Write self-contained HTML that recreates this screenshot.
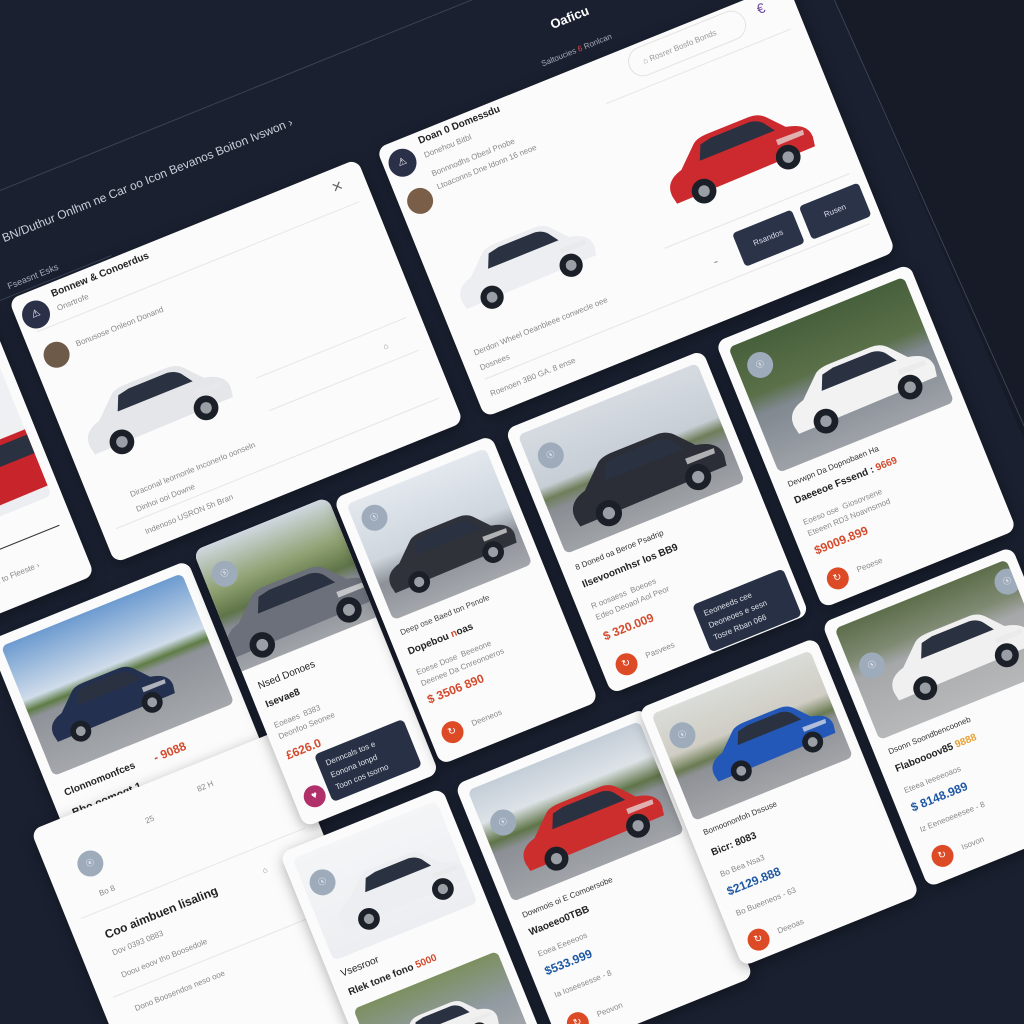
<!DOCTYPE html>
<html><head><meta charset="utf-8"><style>
html,body{margin:0;padding:0;width:1024px;height:1024px;overflow:hidden;background:#1a2030;font-family:"Liberation Sans",sans-serif;}
#root{position:relative;width:1024px;height:1024px;overflow:hidden;background:#1a2030}
.bg2{position:absolute;left:0;top:0;width:1024px;height:1024px;background:#161b27;clip-path:polygon(835px 0,1024px 0,1024px 440px);}
.bl{position:absolute;background:#3a4255;height:1px;transform-origin:0 0;}
.card{position:absolute;background:#fbfbfb;border-radius:10px;transform:translate(-50%,-50%) rotate(-22deg);overflow:hidden;box-shadow:0 4px 14px rgba(0,0,0,.35);}
.img{position:absolute;left:10px;right:10px;top:10px;border-radius:6px;background:linear-gradient(#b9c6d4,#dfe4ea 38%,#6f8a58 50%,#7c8a6a 55%,#9a9fa6 60%,#b0b3b8);overflow:hidden}
.img.w{background:linear-gradient(#f4f5f7,#eceef1)}
.img.g{background:linear-gradient(#47603c,#5a7049 40%,#808890 55%,#9ea2a8)}
.car{position:absolute}
.badge{position:absolute;width:26px;height:26px;border-radius:50%;background:#9eabbb;color:#fff;font-size:8px;text-align:center;line-height:26px}
.t{position:absolute;font-size:10px;color:#222;white-space:nowrap;font-weight:bold}
.s{position:absolute;font-size:8px;color:#888;white-space:nowrap}
.p{position:absolute;font-size:12px;font-weight:bold;white-space:nowrap;color:#d44a2c}
.p.b{color:#1f58a3}
.btn{position:absolute;width:22px;height:22px;border-radius:50%;background:#dd4a26;color:#fff;font-size:10px;text-align:center;line-height:22px}
.hr{position:absolute;left:14px;right:14px;height:1px;background:#e6e6e6}
.dk{position:absolute;background:#273044;color:#dfe3ea;font-size:8px;border-radius:5px;padding:6px 8px;line-height:13px}
.dt{position:absolute;color:#c9ced8;font-size:11px;white-space:nowrap;transform-origin:0 0;transform:rotate(-22deg)}
</style></head><body><div id="root">
<svg width="0" height="0" style="position:absolute"><defs>
<symbol id="car" viewBox="0 0 200 100"><path fill="currentColor" d="M8 72 Q6 52 30 46 L56 22 Q62 17 76 17 L130 17 Q143 17 151 27 L167 45 Q193 50 193 68 L191 80 L10 82 Z"/><path fill="#2a3140" d="M63 26 L78 23 L128 23 Q138 24 144 31 L153 44 L55 44 Z"/><path fill="#e8e8e8" d="M150 55 L185 56 L184 62 L150 62 Z" opacity=".7"/><circle cx="46" cy="80" r="15" fill="#1b1f27"/><circle cx="156" cy="80" r="15" fill="#1b1f27"/><circle cx="46" cy="80" r="7" fill="#9a9ea5"/><circle cx="156" cy="80" r="7" fill="#9a9ea5"/></symbol>
</defs></svg>
<div class="bg2"></div>
<div class="bl" style="left:835px;top:0;width:470px;transform:rotate(66deg)"></div>
<div class="bl" style="left:0;top:190px;width:520px;transform:rotate(-22deg)"></div>
<div class="bl" style="left:0;top:300px;width:120px;transform:rotate(-22deg)"></div>

<div class="dt" style="left:548px;top:18px;font-size:13px;color:#fff;font-weight:bold">Oaficu</div>
<div class="dt" style="left:540px;top:60px;font-size:8px;color:#aab">Saltoucies <span style="color:#d44">6</span> Ronlcan</div>
<div class="dt" style="left:0;top:232px;font-size:12px">BN/Duthur Onlhm ne Car oo Icon Bevanos Boiton Ivswon ›</div>
<div class="dt" style="left:6px;top:282px;font-size:9px;color:#aab">Fseasnt Esks</div>

<!-- left partial card C -->
<div class="card" style="left:-125px;top:432px;width:300px;height:430px">
 <div class="img w" style="height:330px"><svg class="car" style="left:165px;top:240px;width:190px;height:100px;color:#c8242c"><use href="#car"/></svg></div>
 <div class="hr" style="top:370px;background:#333"></div>
 <div class="s" style="left:200px;top:395px">Dn to Fleeste ›</div>
</div>

<!-- card B modal -->
<div class="card" style="left:236px;top:361px;width:376px;height:284px">
 <div style="position:absolute;left:342px;top:8px;font-size:18px;color:#666">×</div>
 <div class="hr" style="top:40px"></div>
 <div style="position:absolute;left:6px;top:10px;width:28px;height:28px;border-radius:50%;background:#2a3048;color:#fff;font-size:10px;text-align:center;line-height:28px">⚠</div>
 <div class="t" style="left:42px;top:6px">Bonnew &amp; Conoerdus</div>
 <div class="s" style="left:42px;top:22px">Onsrtrofe</div>
 <div style="position:absolute;left:11px;top:56px;width:26px;height:26px;border-radius:50%;background:#6d5a48"></div>
 <div class="s" style="left:46px;top:62px">Bonusose Onleon Donand</div>
 <svg class="car" style="left:14px;top:92px;width:165px;height:115px;color:#e4e6ea"><use href="#car"/></svg>
 <div class="hr" style="top:165px;left:200px"></div>
 <div class="hr" style="top:200px;left:200px"></div>
 <div class="s" style="left:330px;top:180px">⌂</div>
 <div class="s" style="left:40px;top:222px">Diraconal leornonle Inconerlo oonseln</div>
 <div class="s" style="left:40px;top:238px">Dinhoi ooi Downe</div>
 <div class="hr" style="top:252px"></div>
 <div class="s" style="left:40px;top:262px">Indenoso USRON 5h Bran</div>
</div>

<!-- card A -->
<div class="card" style="left:636px;top:200px;width:443px;height:290px">
 <div style="position:absolute;left:265px;top:4px;width:125px;height:30px;border:1px solid #e3e3e3;border-radius:15px;font-size:8px;color:#999;line-height:30px;padding-left:14px;box-sizing:border-box">⌂ Rosrer Bosfo Bonds</div>
 <div style="position:absolute;left:405px;top:6px;font-size:14px;color:#6a4aa0">€</div>
 <div style="position:absolute;left:5px;top:9px;width:28px;height:28px;border-radius:50%;background:#2a3048;color:#fff;font-size:10px;text-align:center;line-height:28px">⚠</div>
 <div class="t" style="left:42px;top:4px">Doan 0 Domessdu</div>
 <div class="s" style="left:42px;top:20px">Donehou Bitbl</div>
 <div class="s" style="left:42px;top:40px">Bonnnodhs Obesl Pnobe</div>
 <div class="s" style="left:42px;top:54px">Ltoaconns Dne ldonn 16 neoe</div>
 <div style="position:absolute;left:8px;top:52px;width:26px;height:26px;border-radius:50%;background:#7a5e48"></div>
 <div class="hr" style="left:230px;top:44px"></div>
 <svg class="car" style="left:250px;top:80px;width:165px;height:115px;color:#cc2a2e"><use href="#car"/></svg>
 <svg class="car" style="left:16px;top:108px;width:155px;height:100px;color:#eceef1"><use href="#car"/></svg>
 <div class="hr" style="top:200px;left:230px"></div>
 <div style="position:absolute;left:298px;top:212px;width:64px;height:36px;background:#2a3348;border-radius:4px;color:#dde;font-size:8px;text-align:center;line-height:36px">Rsandos</div>
 <div style="position:absolute;left:370px;top:212px;width:64px;height:36px;background:#2a3348;border-radius:4px;color:#dde;font-size:8px;text-align:center;line-height:36px">Rusen</div>
 <div class="s" style="left:270px;top:228px">⌁</div>
 <div class="s" style="left:14px;top:222px">Derdon Wheel Oeanbleee conwecle oee</div>
 <div class="s" style="left:14px;top:238px">Dosnees</div>
 <div class="hr" style="top:254px"></div>
 <div class="s" style="left:14px;top:266px">Roenoen 3B0 GA. 8 ense</div>
</div>

<!-- card D blue car -->
<div class="card" style="left:142px;top:735px;width:215px;height:290px">
 <div class="img" style="height:140px;background:linear-gradient(#6d9bd0,#cfdcea 42%,#5f7c45 50%,#8f9399 56%,#a4a7ab)"><svg class="car" style="left:10px;top:45px;width:140px;height:85px;color:#24304f"><use href="#car"/></svg></div>
 <div class="t" style="left:14px;top:165px">Clonnomonfces</div>
 <div class="p" style="left:110px;top:164px">- 9088</div>
 <div class="t" style="left:14px;top:186px;font-size:11px">Bbo oomogt 1</div>
 <div class="hr" style="top:206px"></div>
 <div class="s" style="left:14px;top:222px">Doonee ooe oo Iouson</div>
 <div class="hr" style="top:245px"></div>
</div>

<!-- card L -->
<div class="card" style="left:212px;top:919px;width:270px;height:300px">
 <div class="badge" style="left:30px;top:40px">ⓔ</div>
 <div class="s" style="left:110px;top:30px">25</div>
 <div class="s" style="left:170px;top:20px">82 H</div>
 <div class="s" style="left:40px;top:80px">Bo 8</div>
 <div class="hr" style="top:100px"></div>
 <div class="t" style="left:30px;top:118px;font-size:12px">Coo aimbuen lisaling</div>
 <div class="s" style="left:30px;top:140px">Dov 0393 0883</div>
 <div class="s" style="left:200px;top:120px">⌂</div>
 <div class="s" style="left:30px;top:164px">Doou eoov tho Boosedole</div>
 <div class="hr" style="top:185px"></div>
 <div class="s" style="left:30px;top:200px">Dono Boosendos neso ooe</div>
</div>

<!-- card J grey car -->
<div class="card" style="left:316px;top:662px;width:145px;height:298px">
 <div class="img" style="height:130px;left:0;right:0;top:0;border-radius:0;background:linear-gradient(#cfd8e0,#8ea070 35%,#5f7448 55%,#858a92 65%,#a0a3a8)"><svg class="car" style="left:-10px;top:40px;width:170px;height:95px;color:#6b707a"><use href="#car"/></svg><div class="badge" style="left:8px;top:20px">ⓢ</div></div>
 <div class="t" style="left:10px;top:145px;font-weight:normal">Nsed Donoes</div>
 <div class="t" style="left:10px;top:165px">Isevae8</div>
 <div class="s" style="left:10px;top:188px">Eoeaes&nbsp;&nbsp;8383</div>
 <div class="s" style="left:10px;top:200px">Deonfoo&nbsp;Seonee</div>
 <div class="p" style="left:10px;top:218px">£626.0</div>
 <div class="btn" style="left:10px;top:262px;background:#b0306a">♥</div>
</div>
<div class="dk" style="left:320px;top:735px;width:80px;transform:rotate(-22deg)">Denncals tos e<br>Eonona Ionpd<br>Toon cos tsorno</div>

<!-- card K dark car -->
<div class="card" style="left:466px;top:600px;width:170px;height:287px">
 <div class="img" style="height:125px;background:linear-gradient(#e3e8ee,#cfd6de 50%,#8d9198 70%,#a3a6ab)"><svg class="car" style="left:5px;top:35px;width:145px;height:85px;color:#2f3239"><use href="#car"/></svg><div class="badge" style="left:8px;top:10px">ⓢ</div></div>
 <div class="s" style="left:12px;top:145px;color:#444">Deep ose Baed ton Psnofe</div>
 <div class="t" style="left:12px;top:165px">Dopebou <span style="color:#d44a2c">n</span>oas</div>
 <div class="s" style="left:12px;top:188px">Eoese Dose&nbsp;&nbsp;Beeeone</div>
 <div class="s" style="left:12px;top:200px">Deenee Da Cnreonoeros</div>
 <div class="p" style="left:12px;top:215px">$ 3506 890</div>
 <div class="btn" style="left:12px;top:250px">↻</div>
 <div class="s" style="left:44px;top:256px">Deeneos</div>
</div>

<!-- card E -->
<div class="card" style="left:657px;top:522px;width:213px;height:285px">
 <div class="img" style="height:128px;background:linear-gradient(#d6dbe1,#c7ced6 45%,#6f7e5a 55%,#8a8e94 65%,#9fa2a6)"><svg class="car" style="left:15px;top:35px;width:175px;height:90px;color:#2b2e36"><use href="#car"/></svg><div class="badge" style="left:10px;top:18px">ⓢ</div></div>
 <div class="s" style="left:14px;top:150px;color:#333">8 Doned oa Beroe Psadrip</div>
 <div class="t" style="left:14px;top:168px">Ilsevoonnhsr los BB9</div>
 <div class="s" style="left:14px;top:192px">R oosaess&nbsp;&nbsp;Boeoes</div>
 <div class="s" style="left:14px;top:204px">Edeo Deoaol Aol Peor</div>
 <div class="p" style="left:14px;top:222px">$ 320.009</div>
 <div class="btn" style="left:14px;top:252px">↻</div>
 <div class="s" style="left:46px;top:258px">Pasvees</div>
</div>
<div class="dk" style="left:698px;top:585px;width:82px;transform:rotate(-22deg)">Eeoneeds cee<br>Deoneoes e sesn<br>Tosre Rban 066</div>

<!-- card F mercedes -->
<div class="card" style="left:866px;top:436px;width:209px;height:287px">
 <div class="img g" style="height:135px"><svg class="car" style="left:25px;top:30px;width:165px;height:100px;color:#f2f2f2"><use href="#car"/></svg><div class="badge" style="left:10px;top:15px">ⓢ</div></div>
 <div class="s" style="left:14px;top:155px;color:#333">Devwpn Da Dopnobaen Ha</div>
 <div class="t" style="left:14px;top:172px">Daeeeoe Fssend : <span style="color:#d44a2c">9669</span></div>
 <div class="s" style="left:14px;top:196px">Eoeso ose&nbsp;&nbsp;Giosovsene</div>
 <div class="s" style="left:14px;top:208px">Eteeen RD3 Noavnsmod</div>
 <div class="p" style="left:14px;top:224px">$9009.899</div>
 <div class="btn" style="left:14px;top:254px">↻</div>
 <div class="s" style="left:46px;top:260px">Peoese</div>
</div>

<!-- card I red car -->
<div class="card" style="left:604px;top:881px;width:205px;height:290px">
 <div class="img" style="height:120px;background:linear-gradient(#c4ced8,#dde2e7 30%,#5f7448 48%,#8c9096 58%,#a0a3a8)"><svg class="car" style="left:20px;top:25px;width:160px;height:95px;color:#cc2e2e"><use href="#car"/></svg><div class="badge" style="left:8px;top:30px">ⓢ</div></div>
 <div class="s" style="left:14px;top:142px;color:#333">Dowmois oi E Comoersobe</div>
 <div class="t" style="left:14px;top:160px">Waoeeo0TBB</div>
 <div class="s" style="left:14px;top:184px">Eoea Eeeeoos</div>
 <div class="p b" style="left:14px;top:200px">$533.999</div>
 <div class="s" style="left:14px;top:228px">Ia Ioseesesse - 8</div>
 <div class="btn" style="left:14px;top:256px">↻</div>
 <div class="s" style="left:46px;top:262px">Peovon</div>
</div>

<!-- card G blue car -->
<div class="card" style="left:779px;top:802px;width:191px;height:278px">
 <div class="img" style="height:115px;background:linear-gradient(#dadcd8,#cfcdc4 40%,#6b7b52 55%,#8e9196 62%,#a2a4a8)"><svg class="car" style="left:30px;top:25px;width:140px;height:80px;color:#2458b8"><use href="#car"/></svg><div class="badge" style="left:8px;top:18px">ⓢ</div></div>
 <div class="s" style="left:14px;top:135px;color:#333">Bomoononfoh Dssuse</div>
 <div class="t" style="left:14px;top:156px">Bicr: 8083</div>
 <div class="s" style="left:14px;top:180px">Bo Bea Nsa3</div>
 <div class="p b" style="left:14px;top:196px">$2129.888</div>
 <div class="s" style="left:14px;top:222px">Bo Bueeneos - 63</div>
 <div class="btn" style="left:14px;top:248px">↻</div>
 <div class="s" style="left:46px;top:254px">Deeoas</div>
</div>

<!-- card H right white car -->
<div class="card" style="left:970px;top:717px;width:205px;height:285px">
 <div class="img" style="height:120px;background:linear-gradient(#5d6e4b,#7f8a72 30%,#a5a7a9 45%,#b7b8ba)"><svg class="car" style="left:25px;top:25px;width:160px;height:80px;color:#f0f0f0"><use href="#car"/></svg><div class="badge" style="left:8px;top:35px">ⓢ</div><div class="badge" style="left:165px;top:8px">ⓢ</div></div>
 <div class="s" style="left:14px;top:140px;color:#333">Dsonn Soondbencooneb</div>
 <div class="t" style="left:14px;top:158px">Flaboooov85 <span style="color:#e8a030">9888</span></div>
 <div class="s" style="left:14px;top:182px">Eteea Ieeeeoaos</div>
 <div class="p b" style="left:14px;top:198px">$ 8148.989</div>
 <div class="s" style="left:14px;top:224px">Iz Eeneoeeesee - 8</div>
 <div class="btn" style="left:14px;top:250px">↻</div>
 <div class="s" style="left:46px;top:256px">Isovon</div>
</div>

<!-- card M bottom white car -->
<div class="card" style="left:415px;top:955px;width:175px;height:290px">
 <div class="img w" style="height:110px"><svg class="car" style="left:15px;top:20px;width:145px;height:85px;color:#eceef1"><use href="#car"/></svg><div class="badge" style="left:6px;top:20px">ⓢ</div></div>
 <div class="t" style="left:12px;top:130px;font-weight:normal">Vsesroor</div>
 <div class="t" style="left:12px;top:150px">Rlek tone fono <span style="color:#d44a2c">5000</span></div>
 <div class="img" style="top:172px;height:90px;background:linear-gradient(#7c9060,#909aa0 50%,#a6a9ad)"><svg class="car" style="left:15px;top:15px;width:120px;height:70px;color:#f0f0f0"><use href="#car"/></svg></div>
</div>
</div></body></html>
